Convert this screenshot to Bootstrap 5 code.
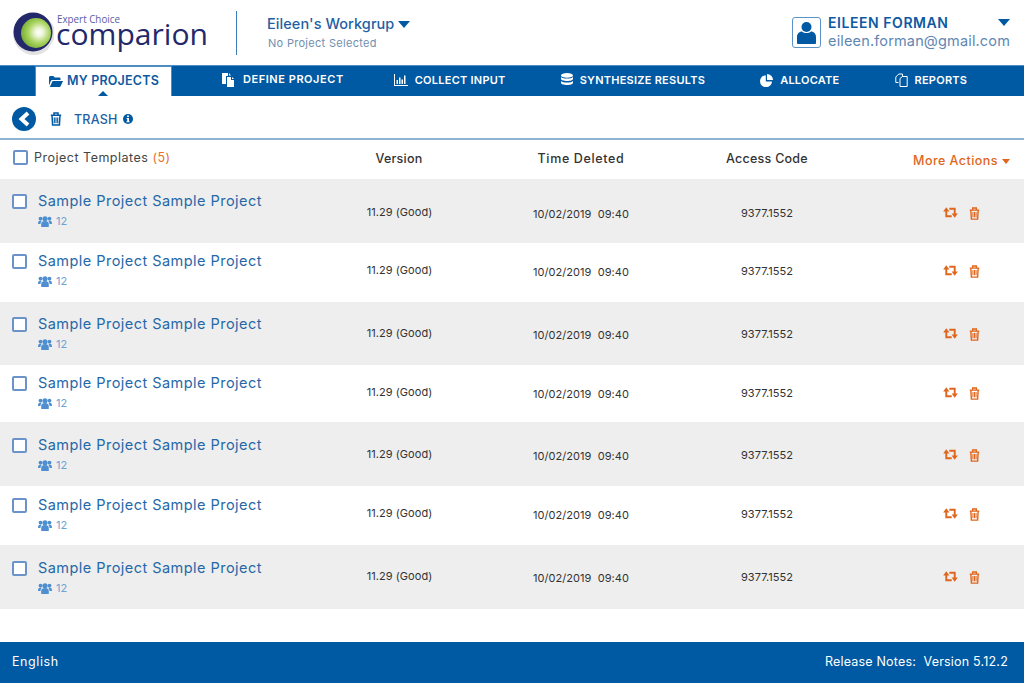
<!DOCTYPE html>
<html lang="en">
<head>
  <meta charset="UTF-8" />
  <meta name="viewport" content="width=device-width, initial-scale=1.0"/>
  <title>Comparion | Trash</title>
  <link rel="stylesheet" href="https://cdn.jsdelivr.net/npm/bootstrap@5.3.3/dist/css/bootstrap.min.css"/>
  <style>
    body { font-family: Inter, "Open Sans", sans-serif; color: #333; overflow: hidden; }
    svg { display: block; flex: none; }
    .top-bar { height: 65px; padding: 0 14px 0 10px; }
    .top-sep { width: 1px; height: 44px; background: #3f7fb8; margin: 0 30px 0 26px; }
    .wg-name { font-size: 14.5px; font-weight: 500; color: #1f5fa3; line-height: 18px; letter-spacing: .06px; }
    .wg-sub { font-size: 11px; color: #6f8fb0; line-height: 14px; margin: 3px 0 0 1px; letter-spacing: .3px; }
    .caret-down { width: 0; height: 0; border-left: 6px solid transparent; border-right: 6px solid transparent; border-top: 7px solid #0059a3; }
    .avatar-box { width: 29px; height: 31px; border: 1px solid #5b93c6; border-radius: 3px; margin-right: 7px; }
    .user-text { margin-bottom: 2px; }
    .user-name { font-size: 14px; font-weight: 600; color: #0e5aa2; letter-spacing: .55px; line-height: 18px; }
    .user-mail { font-size: 14.5px; color: #5f87b2; letter-spacing: .15px; line-height: 18px; }
    .main-nav { height: 31px; background: #0059a3; border-top: 1px solid #4d8dc4; padding-left: 35px; }
    .nav-cell { color: #fff; font-size: 11px; font-weight: 600; letter-spacing: .25px; gap: 7px; margin-left: 55px; padding-bottom: 2px; white-space: nowrap; }
    .nav-cell:nth-child(2) { margin-left: 50px; gap: 8px; letter-spacing: .55px; padding-bottom: 3px; }
    .nav-cell:nth-child(3) { margin-left: 50px; }
    .nav-cell.on { position: relative; background: #fff; color: #0e5aa2; font-size: 12.5px; margin: 0; width: 137px; padding: 0 0 0 13px; gap: 4px; letter-spacing: .2px; border: 1px solid #4d8dc4; border-bottom: 0; }
    .nav-cell.on::after { content: ""; position: absolute; left: 62px; bottom: 0; border: 5px solid transparent; border-top: 0; border-bottom-color: #0059a3; }
    .tool-bar { height: 44px; padding: 4px 0 0 12px; border-bottom: 2px solid #8fb3d3; }
    .tool-trash { color: #0059a3; }
    .back-btn { width: 24px; height: 24px; border-radius: 50%; background: #0059a3; margin-right: 14px; }
    .tool-title { font-size: 12.5px; font-weight: 500; color: #1f5fa3; margin: 2px 6px 0 12px; letter-spacing: .2px; }
    .grid-line { display: grid; grid-template-columns: 330px 138px 226px 146px 184px; }
    .head-line { height: 39px; font-size: 12.5px; font-weight: 500; color: #333; text-align: center; padding-top: 10px; letter-spacing: .25px; }
    .head-line > :nth-child(3) { letter-spacing: .65px; }
    .head-first { padding-left: 13px; }
    .tick { width: 15px; height: 15px; border: 2px solid #6b93c9; border-radius: 2px; background: #fff; }
    .head-name { margin-left: 6px; font-weight: 400; color: #444; font-size: 12.5px; letter-spacing: .5px; line-height: 16px; }
    .head-count { color: #e8702a; }
    .more-link { color: #e0661d; font-size: 12.5px; letter-spacing: .46px; margin-top: 2px; padding-right: 14px; gap: 4px; }
    .caret-small { width: 0; height: 0; border-left: 4.5px solid transparent; border-right: 4.5px solid transparent; border-top: 5px solid #e0661d; }
    .proj-line { font-size: 11px; text-align: center; color: #333; height: var(--h); }
    .proj-line:nth-child(odd) { background: #eee; }
    .proj-line:nth-child(1) { --h: 64px; --t: 14px; --d: 25px; }
    .proj-line:nth-child(2) { --h: 59px; --t: 10px; --d: 19px; }
    .proj-line:nth-child(3) { --h: 63px; --t: 14px; --d: 23px; }
    .proj-line:nth-child(4) { --h: 57px; --t: 10px; --d: 19px; }
    .proj-line:nth-child(5) { --h: 64px; --t: 15px; --d: 24px; }
    .proj-line:nth-child(6) { --h: 59px; --t: 11px; --d: 19px; }
    .proj-line:nth-child(7) { --h: 64px; --t: 15px; --d: 23px; }
    .cell-name { padding: var(--t) 0 0 12px; text-align: left; }
    .proj-title { font-size: 14.5px; color: #2568a8; line-height: 16px; margin-left: 11px; letter-spacing: .46px; text-decoration: none; }
    .proj-users { margin: 6px 0 0 26px; gap: 4px; color: #6ea2d2; font-size: 11px; line-height: 12px; }
    .proj-users svg { color: #4f8fd0; }
    .cell-ver { padding-top: var(--d); padding-left: 1px; letter-spacing: .05px; }
    .cell-time { padding-top: calc(var(--d) + 2px); letter-spacing: .05px; }
    .cell-code { padding-top: calc(var(--d) + 1px); letter-spacing: .05px; }
    .cell-act { padding: calc(var(--d) + 3px) 0 0 103px; gap: 11px; color: #e0661d; }
    .foot-bar { height: 41px; background: #0059a3; color: #fff; font-size: 12.5px; padding: 0 16px 0 12px; letter-spacing: .2px; }
    .foot-lang { letter-spacing: .6px; }
  </style>
</head>
<body class="d-flex flex-column vh-100">
  <svg width="0" height="0" class="position-absolute">
    <symbol id="i-trash" viewBox="0 0 12 14"><path fill="none" stroke="currentColor" stroke-width="1.500" d="M.8 3.300h10.400M4 3V1h4v2M2 3.300l.6 9.800h6.800l.6-9.800"/><path fill="none" stroke="currentColor" stroke-width="1.100" d="M4.300 5.400v5.800M6 5.400v5.800M7.700 5.400v5.800"/></symbol>
    <symbol id="i-retweet" viewBox="0 0 16 12"><path fill="none" stroke="currentColor" stroke-width="2.100" d="M3.400 4V10H9.300M12.600 8V2H6.700"/><path fill="currentColor" d="M0 4.800 3.400.4l3.400 4.400zM9.200 7.200h6.800l-3.400 4.400z"/></symbol>
    <symbol id="i-users" viewBox="0 0 14 11"><circle cx="7" cy="2.800" r="2.600" fill="currentColor"/><circle cx="2.500" cy="2.600" r="1.900" fill="currentColor"/><circle cx="11.500" cy="2.600" r="1.900" fill="currentColor"/><path fill="currentColor" d="M3.200 11V8c0-2.200 1.700-2.900 3.800-2.900s3.800.7 3.800 2.900v3zM0 7.500c0-2.300 1-3.100 2.500-3.100.7 0 1 .2 1.300.5C2.800 5.600 2.500 6.700 2.500 8H.8C.3 8 0 7.900 0 7.500zM14 7.500c0-2.300-1-3.100-2.500-3.100-.7 0-1 .2-1.300.5 1 .7 1.300 1.800 1.300 3.100h1.700c.5 0 .8-.1.8-.5z"/></symbol>
  </svg>

  <header class="top-bar d-flex align-items-center bg-white">
    <svg width="200" height="52" viewBox="0 0 200 52">
      <defs>
        <radialGradient id="lg" cx=".6" cy=".48" r=".6">
          <stop offset="0" stop-color="#fff"/><stop offset=".22" stop-color="#eef6dc"/><stop offset=".6" stop-color="#a9d45f"/><stop offset="1" stop-color="#76ad34"/>
        </radialGradient>
      </defs>
      <circle cx="24" cy="27" r="21" fill="#e2e2e2"/>
      <circle cx="23" cy="25" r="19.500" fill="#23286b"/>
      <path d="M32 6 48 10V44L36 46l8-14V18z" fill="#fff"/>
      <circle cx="26" cy="26" r="15" fill="url(#lg)"/>
      <text x="47" y="15.500" font-family="Open Sans" font-size="11" fill="#5a5ca6" textLength="63" lengthAdjust="spacingAndGlyphs">Expert Choice</text>
      <text x="46" y="38" font-family="Open Sans" font-size="30" fill="#23286b" textLength="152" lengthAdjust="spacingAndGlyphs">comparion</text>
    </svg>
    <div class="top-sep"></div>
    <div>
      <div class="d-flex align-items-center wg-name">Eileen's Workgrup&nbsp;<span class="caret-down"></span></div>
      <div class="wg-sub">No Project Selected</div>
    </div>
    <div class="d-flex align-items-center ms-auto">
      <div class="avatar-box d-flex align-items-center justify-content-center">
        <svg width="19" height="23" viewBox="0 0 19 23" fill="#0059a3"><circle cx="9.500" cy="6" r="5"/><path d="M0 22v-6c0-4 3-5.500 5-5.500 1 1 3 1.500 4.500 1.500s3.500-.5 4.500-1.500c2 0 5 1.500 5 5.500v6c0 .5-.5 1-1 1H1c-.5 0-1-.5-1-1z"/></svg>
      </div>
      <div class="user-text">
        <div class="d-flex align-items-center justify-content-between user-name">EILEEN FORMAN <span class="caret-down"></span></div>
        <div class="user-mail">eileen.forman@gmail.com</div>
      </div>
    </div>
  </header>

  <nav class="main-nav d-flex align-items-stretch">
    <div class="nav-cell on d-flex align-items-center">
      <svg width="14" height="11" viewBox="0 0 14 11" fill="#0059a3"><path d="M0 1.500C0 .7.600 0 1.400 0h3l1.300 1.500h4.600c.7 0 1.200.5 1.200 1.200V4H3.500C2.700 4 2 4.500 1.700 5.200L0 9.500z"/><path d="M3.600 5H14l-2.400 5.300c-.2.400-.5.7-1 .7H.8z"/></svg>
      MY PROJECTS
    </div>
    <div class="nav-cell d-flex align-items-center">
      <svg width="13" height="14" viewBox="0 0 13 14" fill="#fff"><path d="M0 0h6v3H4v8H0z"/><path d="M5 4h4v3h3v7H5z"/><path d="M10 4l2 2h-2zM7 0l2 2.500H7z"/></svg>
      DEFINE PROJECT
    </div>
    <div class="nav-cell d-flex align-items-center">
      <svg width="14" height="12" viewBox="0 0 14 12" fill="#fff"><path d="M0 0h1v11h13v1H0z"/><path d="M2.500 6h1.500v4H2.500zM5 3.500h1.500V10H5zM7.500 5.500H9V10H7.500zM10 1.500h1.500V10H10z"/></svg>
      COLLECT INPUT
    </div>
    <div class="nav-cell d-flex align-items-center">
      <svg width="12" height="14" viewBox="0 0 12 14" fill="#fff"><ellipse cx="6" cy="2.400" rx="6" ry="2.400"/><path d="M0 4v1.800c0 1.300 2.700 2.300 6 2.300s6-1 6-2.300V4c-1.100 1-3.400 1.600-6 1.600S1.100 5 0 4z"/><path d="M0 8v1.800c0 1.300 2.700 2.300 6 2.300s6-1 6-2.300V8c-1.100 1-3.400 1.600-6 1.600S1.100 9 0 8z"/></svg>
      SYNTHESIZE RESULTS
    </div>
    <div class="nav-cell d-flex align-items-center">
      <svg width="13" height="13" viewBox="0 0 13 13" fill="#fff"><path d="M5.800 1.200A6 6 0 1 0 12 7.400H5.800z"/><path d="M7 0a6 6 0 0 1 6 6H7z"/></svg>
      ALLOCATE
    </div>
    <div class="nav-cell d-flex align-items-center">
      <svg width="13" height="14" viewBox="0 0 13 14" fill="none" stroke="#fff"><path d="M3.500 9.500H.8V4l3-3h3.700v2.500"/><path d="M5 5.500l2.500-2H12.200v10H5z"/></svg>
      REPORTS
    </div>
  </nav>

  <div class="tool-bar d-flex align-items-center">
    <div class="back-btn d-flex align-items-center justify-content-center">
      <svg width="12" height="16" viewBox="0 0 12 16"><path fill="none" stroke="#fff" stroke-width="4" d="M10 2 3.500 8l6.500 6"/></svg>
    </div>
    <svg width="12" height="14" class="tool-trash"><use href="#i-trash"/></svg>
    <span class="tool-title">TRASH</span>
    <svg width="10" height="10" viewBox="0 0 10 10"><circle cx="5" cy="5" r="5" fill="#0059a3"/><path fill="#fff" d="M4 1.600h2v1.500H4zM3.600 4h2.400v3.200h.6v1H3.500v-1h.7V5h-.6z"/></svg>
  </div>

  <div class="grid-line head-line">
    <div class="d-flex head-first"><span class="tick"></span><span class="head-name">Project Templates <span class="head-count">(5)</span></span></div>
    <div>Version</div>
    <div>Time Deleted</div>
    <div>Access Code</div>
    <div class="more-link d-flex align-items-center justify-content-end align-self-start">More Actions <span class="caret-small"></span></div>
  </div>

  <div id="projectList"></div>

  <footer class="foot-bar d-flex align-items-center justify-content-between mt-auto">
    <span class="foot-lang">English</span>
    <span>Release Notes:&nbsp; Version 5.12.2</span>
  </footer>

  <script src="https://cdn.jsdelivr.net/npm/bootstrap@5.3.3/dist/js/bootstrap.bundle.min.js"></script>
  <script>
    const list = document.getElementById("projectList");
    for (let i = 0; i < 7; i++) {
      list.insertAdjacentHTML("beforeend", `
        <div class="grid-line proj-line">
          <div class="cell-name">
            <div class="d-flex align-items-center"><span class="tick"></span><a href="#" class="proj-title">Sample Project Sample Project</a></div>
            <div class="proj-users d-flex align-items-center"><svg width="14" height="11"><use href="#i-users"/></svg>12</div>
          </div>
          <div class="cell-ver">11.29 (Good)</div>
          <div class="cell-time">10/02/2019&nbsp; 09:40</div>
          <div class="cell-code">9377.1552</div>
          <div class="cell-act d-flex">
            <svg width="15" height="11"><use href="#i-retweet"/></svg>
            <svg width="11" height="13"><use href="#i-trash"/></svg>
          </div>
        </div>`);
    }
  </script>
</body>
</html>
